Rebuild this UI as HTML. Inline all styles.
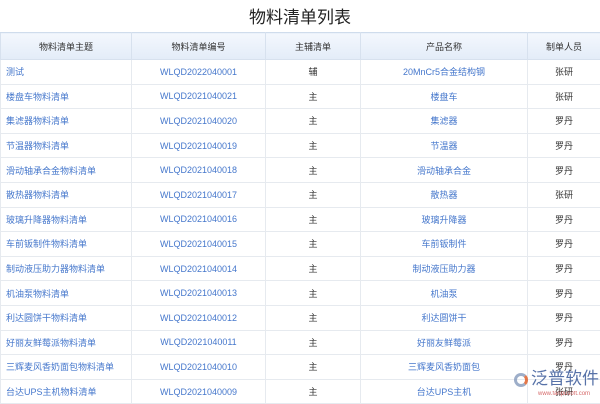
<!DOCTYPE html><html><head><meta charset="utf-8"><style>
body{margin:0;width:600px;height:400px;overflow:hidden;background:#fff;font-family:"Liberation Sans","Noto Sans CJK SC",sans-serif;}
.t{position:absolute;top:3px;left:0;width:600px;text-align:center;font-size:17px;color:#222;}
table{position:absolute;top:32px;left:0;width:600px;border-collapse:collapse;table-layout:fixed;font-size:9px;}
th{height:24px;background:linear-gradient(#f3f7fd,#e3ecf8);color:#333;font-weight:normal;border:1px solid #d7e1ee;border-top:1px solid #cfdcec}
td{height:23.6px;border:1px solid #e6eaef;text-align:center;color:#333;padding:0}
td.b{color:#4577cc}
td.l{text-align:left;padding-left:5px}
.logo{position:absolute;left:531px;top:369px;font-size:17px;line-height:20px;white-space:nowrap;color:#3a5a9a;opacity:.85}
.ic{position:absolute;left:514px;top:373px;width:14px;height:14px;border-radius:50%;border:3px solid #8da0c0;border-right-color:#e0602a;box-sizing:border-box;opacity:.85}
.url{position:absolute;left:538px;top:391px;font-size:6px;white-space:nowrap;color:#c44;opacity:.8}
</style></head><body>
<div class="t">物料清单列表</div>
<table>
<colgroup><col style="width:131px"><col style="width:134px"><col style="width:95px"><col style="width:167px"><col style="width:73px"></colgroup>
<tr><th>物料清单主题</th><th>物料清单编号</th><th>主辅清单</th><th>产品名称</th><th>制单人员</th></tr>
<tr><td class="b l">测试</td><td class="b">WLQD2022040001</td><td>辅</td><td class="b">20MnCr5合金结构钢</td><td>张研</td></tr>
<tr><td class="b l">楼盘车物料清单</td><td class="b">WLQD2021040021</td><td>主</td><td class="b">楼盘车</td><td>张研</td></tr>
<tr><td class="b l">集滤器物料清单</td><td class="b">WLQD2021040020</td><td>主</td><td class="b">集滤器</td><td>罗丹</td></tr>
<tr><td class="b l">节温器物料清单</td><td class="b">WLQD2021040019</td><td>主</td><td class="b">节温器</td><td>罗丹</td></tr>
<tr><td class="b l">滑动轴承合金物料清单</td><td class="b">WLQD2021040018</td><td>主</td><td class="b">滑动轴承合金</td><td>罗丹</td></tr>
<tr><td class="b l">散热器物料清单</td><td class="b">WLQD2021040017</td><td>主</td><td class="b">散热器</td><td>张研</td></tr>
<tr><td class="b l">玻璃升降器物料清单</td><td class="b">WLQD2021040016</td><td>主</td><td class="b">玻璃升降器</td><td>罗丹</td></tr>
<tr><td class="b l">车前钣制件物料清单</td><td class="b">WLQD2021040015</td><td>主</td><td class="b">车前钣制件</td><td>罗丹</td></tr>
<tr><td class="b l">制动液压助力器物料清单</td><td class="b">WLQD2021040014</td><td>主</td><td class="b">制动液压助力器</td><td>罗丹</td></tr>
<tr><td class="b l">机油泵物料清单</td><td class="b">WLQD2021040013</td><td>主</td><td class="b">机油泵</td><td>罗丹</td></tr>
<tr><td class="b l">利达圆饼干物料清单</td><td class="b">WLQD2021040012</td><td>主</td><td class="b">利达圆饼干</td><td>罗丹</td></tr>
<tr><td class="b l">好丽友鲜莓派物料清单</td><td class="b">WLQD2021040011</td><td>主</td><td class="b">好丽友鲜莓派</td><td>罗丹</td></tr>
<tr><td class="b l">三辉麦风香奶面包物料清单</td><td class="b">WLQD2021040010</td><td>主</td><td class="b">三辉麦风香奶面包</td><td>罗丹</td></tr>
<tr><td class="b l">台达UPS主机物料清单</td><td class="b">WLQD2021040009</td><td>主</td><td class="b">台达UPS主机</td><td>张研</td></tr>
</table>
<div class="ic"></div>
<div class="logo">泛普软件</div>
<div class="url">www.fanpusoft.com</div>
</body></html>
